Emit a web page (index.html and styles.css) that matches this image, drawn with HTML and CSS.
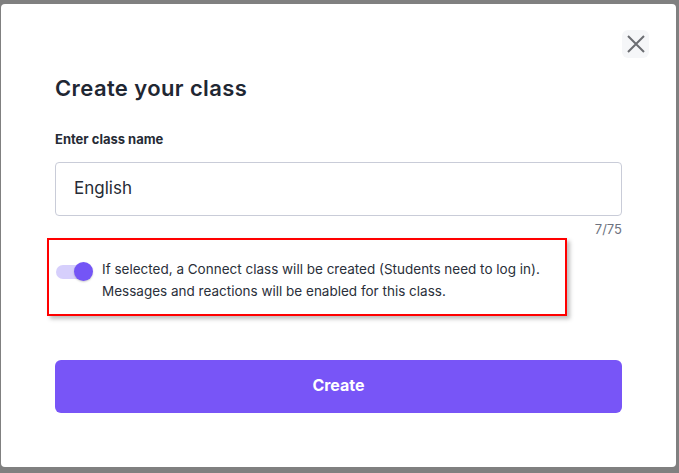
FILE: index.html
```html
<!DOCTYPE html>
<html>
<head>
<meta charset="utf-8">
<link rel="stylesheet" href="styles.css">
</head>
<body>
<div class="modal">
  <div class="topbar">
    <button class="close" aria-label="Close">
      <svg width="20" height="20" viewBox="0 0 20 20"><path d="M2 2 L18 18 M18 2 L2 18" stroke="#6b6d72" stroke-width="2" fill="none" stroke-linecap="butt"/></svg>
    </button>
  </div>
  <div class="content">
    <h1 class="title">Create your class</h1>
    <label class="label">Enter class name</label>
    <div class="input">English</div>
    <div class="counter">7/75</div>
    <div class="highlight">
      <span class="toggle"><span class="track"></span><span class="knob"></span></span>
      <p class="desc">If selected, a Connect class will be created (Students need to log in).<br>Messages and reactions will be enabled for this class.</p>
    </div>
    <button class="create">Create</button>
  </div>
</div>
</body>
</html>
```
FILE: styles.css
```css
html, body {
  margin: 0;
  padding: 0;
  background: #808080;
  font-family: Inter, "Noto Sans", sans-serif;
}
.modal {
  margin: 4px 0 0 1px;
  width: 675px;
  height: 463px;
  background: #fff;
  border-radius: 4px;
  box-sizing: border-box;
}
.topbar {
  display: flex;
  justify-content: flex-end;
  padding: 26px 27px 0 0;
  height: 28px;
}
.close {
  width: 27px;
  height: 28px;
  border: 0;
  padding: 0;
  border-radius: 6px;
  background: #f5f6f8;
  display: flex;
  align-items: center;
  justify-content: center;
}
.content {
  padding: 16px 54px 0 54px;
  display: flex;
  flex-direction: column;
}
.title {
  margin: 0;
  font-size: 22px;
  line-height: 28px;
  font-weight: 600;
  letter-spacing: 0.4px;
  color: #1f2733;
}
.label {
  margin-top: 28px;
  font-size: 13px;
  line-height: 18px;
  font-weight: 700;
  color: #262b35;
}
.input {
  margin-top: 14px;
  height: 54px;
  flex: none;
  box-sizing: border-box;
  border: 1px solid #c9ccd8;
  border-radius: 4px;
  padding: 0 18px 3px;
  display: flex;
  align-items: center;
  font-size: 17px;
  color: #262b35;
}
.counter {
  margin-top: 5px;
  text-align: right;
  font-size: 13px;
  line-height: 16px;
  color: #6e7380;
}
.highlight {
  margin: 1px 0 0 -8px;
  width: 520px;
  height: 78px;
  flex: none;
  box-sizing: border-box;
  border: 2px solid #ff0000;
  box-shadow: 3px 3px 4px rgba(0,0,0,0.25);
  display: flex;
  align-items: center;
  padding: 6px 0 0 7px;
  gap: 8px;
}
.toggle {
  position: relative;
  width: 38px;
  height: 20px;
  flex: none;
  margin-top: -16px;
}
.track {
  position: absolute;
  left: 0;
  top: 3px;
  width: 34px;
  height: 14px;
  border-radius: 7px;
  background: #d6cffc;
}
.knob {
  position: absolute;
  left: 18px;
  top: 0;
  width: 19px;
  height: 19px;
  border-radius: 50%;
  background: #7455f6;
  box-shadow: 0 1px 2px rgba(0,0,0,0.2);
}
.desc {
  margin: 0;
  font-size: 13.5px;
  line-height: 22px;
  color: #2a2f3a;
}
.create {
  margin-top: 44px;
  height: 53px;
  flex: none;
  border: 0;
  border-radius: 6px;
  background: #7855f7;
  color: #fff;
  font-family: Inter, "Noto Sans", sans-serif;
  font-size: 16px;
  font-weight: 700;
  padding: 0 0 3px;
}
```
